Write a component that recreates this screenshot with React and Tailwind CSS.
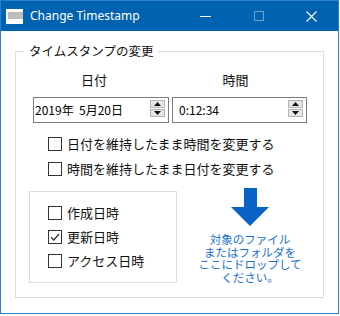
import React from 'react';

const JP = "font-['Noto_Sans_CJK_JP','Noto_Sans',sans-serif]";

// ── Small Win32-style controls ───────────────────────────────────────────────
function Check({ checked, label }) {
  return (
    <div className="flex items-center h-[20px]">
      <span className="w-[14px] h-[14px] border border-[#333333] bg-white flex items-center justify-center shrink-0">
        {checked && (
          <svg width="12" height="12" viewBox="0 0 12 12">
            <path d="M2 6.2l2.8 2.8L10 3" stroke="#333333" strokeWidth="1.3" fill="none" />
          </svg>
        )}
      </span>
      <span className={`ml-[5px] text-[13px] leading-[20px] text-[#111111] whitespace-nowrap ${JP}`}>{label}</span>
    </div>
  );
}

function Spin() {
  return (
    <div className="flex flex-col gap-[1px] mt-[2px]">
      <div className="w-[15px] h-[8px] bg-[#e6e6e6] border border-[#b4b4b4] flex items-center justify-center">
        <svg width="7" height="4" viewBox="0 0 7 4"><path d="M3.5 0L7 4H0z" fill="#111" /></svg>
      </div>
      <div className="w-[15px] h-[8px] bg-[#e6e6e6] border border-[#b4b4b4] flex items-center justify-center">
        <svg width="7" height="4" viewBox="0 0 7 4"><path d="M0 0h7L3.5 4z" fill="#111" /></svg>
      </div>
    </div>
  );
}

function SpinBox({ value, className }) {
  return (
    <div className={`h-[26px] border border-[#7a7a7a] bg-white flex items-start justify-between pr-[3px] ${className}`}>
      <span className={`text-[12px] leading-[24px] text-black whitespace-pre ${JP}`}>{value}</span>
      <Spin />
    </div>
  );
}

export default function App() {
  return (
    <div className="w-[340px] h-[316px] bg-white">
      <div className="w-[339px] h-[314px] border border-[#2d80cf] flex flex-col">
        {/* Title bar */}
        <div className="h-[30px] bg-[#0063b1] flex items-center text-white">
          <div className="ml-[5px] w-[17px] h-[15px] bg-white p-[2px] pr-0 flex flex-col">
            <div className="h-[7px] mt-[1px] bg-[#bdbdbd]" />
          </div>
          <span className="ml-[7px] text-[12px] font-['Segoe_UI','Noto_Sans',sans-serif] leading-none">Change Timestamp</span>
          <div className="ml-auto flex h-full">
            <div className="w-[53px] flex items-center justify-center">
              <div className="w-[11px] h-[1px] bg-white" />
            </div>
            <div className="w-[53px] flex items-center justify-center">
              <div className="w-[10px] h-[10px] border border-white/40" />
            </div>
            <div className="w-[53px] flex items-center justify-center">
              <svg width="11" height="11" viewBox="0 0 11 11">
                <path d="M0.5 0.5l10 10M10.5 0.5l-10 10" stroke="white" strokeWidth="1.1" />
              </svg>
            </div>
          </div>
        </div>

        {/* Body */}
        <div className="flex-1 bg-white px-[14px] pt-[12px]">
          <fieldset className="border border-[#dcdcdc] pb-[14px]">
            <legend className={`ml-[8px] px-[5px] text-[12.5px] leading-[16px] text-[#111111] ${JP}`}>
              タイムスタンプの変更
            </legend>

            <div className="grid grid-cols-[136px_135px] gap-x-[3px] ml-[17px] mt-[13px]">
              <div className={`text-center pr-[14px] text-[13px] leading-[16px] text-[#111111] ${JP}`}>日付</div>
              <div className={`text-center pr-[8px] text-[13px] leading-[16px] text-[#111111] ${JP}`}>時間</div>
              <SpinBox className="mt-[9px] pl-[1px]" value={'2019年  5月20日'} />
              <SpinBox className="mt-[9px] pl-[6px]" value="0:12:34" />
            </div>

            <div className="pl-[32px] mt-[11px] flex flex-col gap-[5px]">
              <Check label="日付を維持したまま時間を変更する" />
              <Check label="時間を維持したまま日付を変更する" />
            </div>

            <div className="flex mt-[9px]">
              <div className="ml-[13px] mt-[3px] w-[148px] h-[92px] border border-[#dcdcdc] pl-[18px] pt-[11px] flex flex-col gap-[4px]">
                <Check label="作成日時" />
                <Check checked label="更新日時" />
                <Check label="アクセス日時" />
              </div>
              <div className="flex-1 flex flex-col items-center">
                <svg width="38" height="38" viewBox="0 0 38 38">
                  <path d="M13 0h13v19h12L19 38 0 19h13z" fill="#0a64c8" />
                </svg>
                <div className={`mt-[7px] text-center text-[11.5px] leading-[12.5px] text-[#1a6fd1] ${JP}`}>
                  対象のファイル<br />
                  またはフォルダを<br />
                  ここにドロップして<br />
                  ください。
                </div>
              </div>
            </div>
          </fieldset>
        </div>
      </div>
    </div>
  );
}
